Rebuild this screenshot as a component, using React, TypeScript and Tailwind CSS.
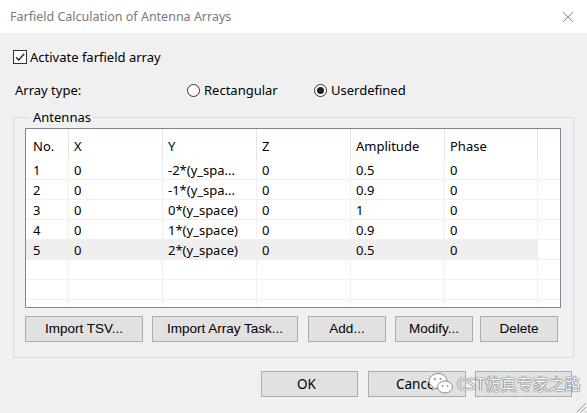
import React from 'react';

const font = "font-['Noto_Sans','Open_Sans',sans-serif]";

const cols = [43, 94, 94, 94, 94, 93];

const rows = [
  ['1', '0', '-2*(y_spa...', '0', '0.5', '0'],
  ['2', '0', '-1*(y_spa...', '0', '0.9', '0'],
  ['3', '0', '0*(y_space)', '0', '1', '0'],
  ['4', '0', '1*(y_space)', '0', '0.9', '0'],
  ['5', '0', '2*(y_space)', '0', '0.5', '0'],
  ['', '', '', '', '', ''],
  ['', '', '', '', '', ''],
  ['', '', '', '', '', ''],
];

const headers = ['No.', 'X', 'Y', 'Z', 'Amplitude', 'Phase'];

function Btn({ label, w, className = '' }: { label: string; w: string; className?: string }) {
  return (
    <button
      className={`${w} h-[26px] bg-[#e1e1e1] border border-[#adadad] text-[13.5px] text-black flex items-center justify-center ${className}`}
    >
      {label}
    </button>
  );
}

function Radio({ checked, label }: { checked?: boolean; label: string }) {
  return (
    <div className="flex items-center gap-[4px]">
      <span className="w-[13px] h-[13px] rounded-full border border-[#333] bg-white flex items-center justify-center">
        {checked && <span className="w-[7px] h-[7px] rounded-full bg-[#222]" />}
      </span>
      <span>{label}</span>
    </div>
  );
}

export default function App() {
  return (
    <div className={`relative w-[587px] h-[413px] bg-[#f0f0f0] overflow-hidden text-[13px] leading-[16px] text-black ${font}`}>
      {/* title bar */}
      <div className="h-[33px] bg-white flex items-center justify-between pl-[10px] pr-[13px]">
        <span className="text-[12.5px] text-[#7a7a7a]">Farfield Calculation of Antenna Arrays</span>
        <svg width="12" height="12" viewBox="0 0 12 12">
          <path d="M1 1L11 11M11 1L1 11" stroke="#8a8a8a" strokeWidth="1" />
        </svg>
      </div>

      <div className="pl-[13px] pr-[14px]">
        <div className="flex items-center gap-[3px] mt-[16px] h-[16px]">
          <span className="w-[14px] h-[14px] border border-[#333] bg-white flex items-center justify-center">
            <svg width="12" height="12" viewBox="0 0 12 12">
              <path d="M2 6.2L4.8 9L10.2 2.8" stroke="#222" strokeWidth="1.3" fill="none" />
            </svg>
          </span>
          <span>Activate farfield array</span>
        </div>

        <div className="flex items-center mt-[17px] h-[16px]">
          <span className="w-[174px] pl-[2px]">Array type:</span>
          <div className="w-[127px]">
            <Radio label="Rectangular" />
          </div>
          <Radio checked label="Userdefined" />
        </div>

        <fieldset className="mt-[11px] border border-[#dcdcdc] px-[11px] pb-[15px] w-[561px]">
          <legend className="ml-[6px] px-[2px] leading-[16px]">Antennas</legend>

          <div className="mt-[3px] w-[536px] h-[180px] bg-white border border-[#828790] overflow-hidden">
            <div className="flex h-[31px]">
              {headers.map((h, i) => (
                <div
                  key={h}
                  style={{ width: cols[i] }}
                  className={`flex items-center pt-[3px] border-r border-[#e5e5e5] ${i === 0 ? 'pl-[7px]' : 'pl-[5px]'}`}
                >
                  {h}
                </div>
              ))}
              <div className="flex-1" />
            </div>
            {rows.map((r, ri) => (
              <div key={ri} className="flex h-[20px] leading-[20px]">
                {r.map((c, ci) => (
                  <div
                    key={ci}
                    style={{ width: cols[ci] }}
                    className={`border-r border-b border-[#f0f0f0] whitespace-nowrap overflow-hidden ${ci === 0 ? 'pl-[7px]' : 'pl-[5px]'} ${ri === 4 ? 'bg-[#efefef]' : ''}`}
                  >
                    {c}
                  </div>
                ))}
                <div className="flex-1 border-b border-[#f0f0f0]" />
              </div>
            ))}
          </div>

          <div className="flex mt-[8px] font-['Liberation_Sans',sans-serif]">
            <Btn label="Import TSV..." w="w-[118px]" />
            <Btn label="Import Array Task..." w="w-[146px]" className="ml-[9px]" />
            <Btn label="Add..." w="w-[78px]" className="ml-[10px]" />
            <Btn label="Modify..." w="w-[78px]" className="ml-[9px]" />
            <Btn label="Delete" w="w-[78px]" className="ml-[7px]" />
          </div>
        </fieldset>

        <div className="flex justify-end mt-[13px] pr-[1px]">
          <Btn label="OK" w="w-[97px]" className="justify-start pl-[35px]" />
          <Btn label="Cancel" w="w-[98px]" className="ml-[10px]" />
          <Btn label="" w="w-[97px]" className="ml-[9px]" />
        </div>
      </div>

      {/* watermark */}
      <div className="absolute left-[428px] top-[372px] flex items-center gap-[3px] pointer-events-none whitespace-nowrap">
        <svg width="26" height="24" viewBox="0 0 26 24">
          <ellipse cx="10" cy="9" rx="9" ry="7.5" fill="#fff" stroke="#8d8d8d" strokeWidth="1" />
          <path d="M5 14.5L4 18L8 16" fill="#fff" stroke="#8d8d8d" strokeWidth="1" />
          <ellipse cx="17" cy="15" rx="7.5" ry="6" fill="#fff" stroke="#8d8d8d" strokeWidth="1" />
          <circle cx="7" cy="7" r="1.1" fill="#8d8d8d" />
          <circle cx="12.5" cy="7" r="1.1" fill="#8d8d8d" />
          <circle cx="14.5" cy="14" r="0.9" fill="#8d8d8d" />
          <circle cx="19.5" cy="14" r="0.9" fill="#8d8d8d" />
        </svg>
        <span className="text-[16px] leading-[20px] text-[#f4f4f4] font-['Noto_Sans','Noto_Sans_CJK_SC',sans-serif] [text-shadow:0_0_1px_#666,0_0_1px_#666,0_0_1px_#666]">
          CST仿真专家之路
        </span>
      </div>

      {/* resize grip */}
      <svg className="absolute right-0 bottom-0" width="14" height="14" viewBox="0 0 14 14">
        <path d="M13 4L4 13M13 8L8 13M13 12L12 13" stroke="#a0a0a0" strokeWidth="1" />
      </svg>
    </div>
  );
}
